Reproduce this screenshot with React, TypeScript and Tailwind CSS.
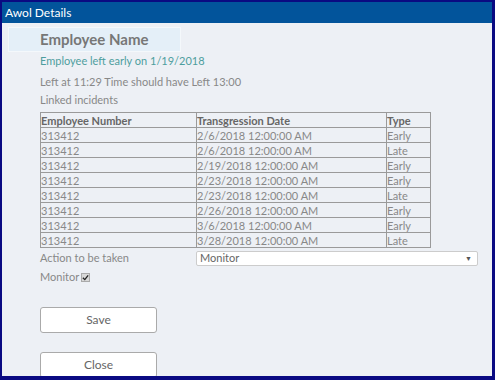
import React from 'react';

const incidents = [
  { number: '313412', date: '2/6/2018 12:00:00 AM', type: 'Early' },
  { number: '313412', date: '2/6/2018 12:00:00 AM', type: 'Late' },
  { number: '313412', date: '2/19/2018 12:00:00 AM', type: 'Early' },
  { number: '313412', date: '2/23/2018 12:00:00 AM', type: 'Early' },
  { number: '313412', date: '2/23/2018 12:00:00 AM', type: 'Late' },
  { number: '313412', date: '2/26/2018 12:00:00 AM', type: 'Early' },
  { number: '313412', date: '3/6/2018 12:00:00 AM', type: 'Early' },
  { number: '313412', date: '3/28/2018 12:00:00 AM', type: 'Late' },
];

export default function App() {
  return (
    <div
      className="w-[495px] h-[380px] bg-[#0a0a82] pt-[2px] pl-[2px] pr-[3px] pb-[4px] flex flex-col"
      style={{ fontFamily: 'Lato, "Liberation Sans", sans-serif' }}
    >
      <div className="h-[21px] bg-[#02549b] text-white text-[12px] leading-[21px] pl-[3px] shrink-0">
        Awol Details
      </div>
      <div className="flex-1 bg-[#edf0f5] overflow-hidden text-[11px] text-[#888]">
        <div className="ml-[6px] mt-[4px] w-[173px] h-[25px] bg-[#e4eff8] border border-[#f4f8fb] pl-[31px] text-[15px] font-bold text-[#777] leading-[23px]">
          Employee Name
        </div>
        <div className="pl-[38px]">
          <div className="mt-[2px] h-[14px] leading-[14px] text-[#4d9e9e]">Employee left early on 1/19/2018</div>
          <div className="mt-[7px] h-[14px] leading-[14px]">Left at 11:29 Time should have Left 13:00</div>
          <div className="mt-[4px] h-[14px] leading-[14px]">Linked incidents</div>
          <table className="mt-[5px] border-collapse w-[390px] table-fixed">
            <colgroup>
              <col className="w-[156px]" />
              <col className="w-[190px]" />
              <col className="w-[44px]" />
            </colgroup>
            <thead>
              <tr className="h-[15px]">
                <th className="border border-[#9a9a9a] p-0 text-left font-bold text-[#666] leading-[13px]">Employee Number</th>
                <th className="border border-[#9a9a9a] p-0 text-left font-bold text-[#666] leading-[13px]">Transgression Date</th>
                <th className="border border-[#9a9a9a] p-0 text-left font-bold text-[#666] leading-[13px]">Type</th>
              </tr>
            </thead>
            <tbody>
              {incidents.map((row, i) => (
                <tr key={i} className="h-[15px]">
                  <td className="border border-[#9a9a9a] p-0 leading-[13px]">{row.number}</td>
                  <td className="border border-[#9a9a9a] p-0 leading-[13px]">{row.date}</td>
                  <td className="border border-[#9a9a9a] p-0 leading-[13px]">{row.type}</td>
                </tr>
              ))}
            </tbody>
          </table>
          <div className="mt-[3px] flex items-center h-[15px]">
            <div className="w-[156px]">Action to be taken</div>
            <div className="w-[282px] h-[15px] bg-white border border-[#ccc] rounded-[2px] flex items-center justify-between pl-[3px] pr-[5px]">
              <span className="text-[#666]">Monitor</span>
              <span className="text-[7px] text-[#555]">▼</span>
            </div>
          </div>
          <div className="mt-[4px] h-[14px] flex items-center gap-[2px]">
            <span>Monitor</span>
            <span className="w-[9px] h-[9px] bg-[#d8d8d8] border border-[#aaa] flex items-center justify-center">
              <svg width="7" height="7" viewBox="0 0 8 8">
                <path d="M1 4.2 L3.2 6.4 L7 1.5" stroke="#222" strokeWidth="1.5" fill="none" />
              </svg>
            </span>
          </div>
          <button className="block mt-[23px] w-[117px] h-[26px] bg-white border border-[#aaa] rounded-[3px] text-[12px] text-[#666]">
            Save
          </button>
          <button className="block mt-[19px] w-[117px] h-[26px] bg-white border border-[#aaa] rounded-[3px] text-[12px] text-[#666]">
            Close
          </button>
        </div>
      </div>
    </div>
  );
}
